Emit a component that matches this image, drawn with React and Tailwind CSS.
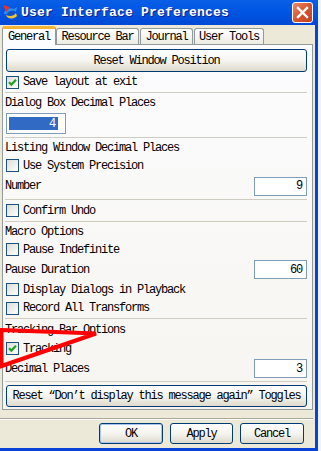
import React from "react";

const font = "font-['Liberation_Mono',monospace] text-[12px] tracking-[-1.2px] text-black";

function CheckBox({ checked }) {
  return (
    <span className="w-[13px] h-[13px] border border-[#1c5180] bg-gradient-to-br from-[#dcdcd7] to-white flex items-center justify-center shrink-0">
      {checked && (
        <svg width="9" height="9" viewBox="0 0 9 9">
          <path d="M1 4.2 L3.4 6.6 L8 1.8" stroke="#21a121" strokeWidth="2.2" fill="none" />
        </svg>
      )}
    </span>
  );
}

function CheckRow({ label, checked, h }) {
  return (
    <div className={`flex items-center gap-[4px] pl-[1px] ${h}`}>
      <CheckBox checked={checked} />
      <span>{label}</span>
    </div>
  );
}

function NumField({ value }) {
  return (
    <div className="w-[53px] h-[19px] border border-[#7f9db9] bg-white flex items-center justify-end pr-[4px]">
      {value}
    </div>
  );
}

function Sep() {
  return <div className="h-px bg-[#cfcdc0]" />;
}

function XpButton({ children, className = "" }) {
  return (
    <div
      className={`border border-[#003c74] rounded-[3px] bg-gradient-to-b from-white via-[#f5f4ef] to-[#dedbcd] flex items-center justify-center ${className}`}
    >
      {children}
    </div>
  );
}

function Tab({ label, active, w }) {
  if (active) {
    return (
      <div
        className={`${w} h-[19px] -mb-px relative z-10 bg-[#fcfcfe] border-x border-[#919b9c] rounded-t-[3px] border-t-[3px] border-t-[#f5b336] flex items-center justify-center pb-[1px]`}
      >
        {label}
      </div>
    );
  }
  return (
    <div
      className={`${w} h-[16px] bg-gradient-to-b from-white to-[#ecebe4] border border-b-0 border-[#919b9c] rounded-t-[3px] flex items-center justify-center`}
    >
      {label}
    </div>
  );
}

export default function App() {
  return (
    <div className={`relative w-[321px] h-[451px] overflow-hidden bg-[#eef2fb] ${font}`}>
      <div className="w-[318px] flex flex-col">
        {/* title bar */}
        <div className="h-[25px] bg-gradient-to-b from-[#0a5fe6] via-[#0054e3] to-[#0049d4] flex items-center pl-[2px] pr-[5px]">
          <svg width="17" height="17" viewBox="0 0 17 17" className="shrink-0">
            <path d="M2 10 C2 5 7 3 12 5 L15 3 L14 8 C12 6 7 6 5 10 Z" fill="#2b8cf0" />
            <path d="M4 11 C5 15 11 16 15 12 L14 9 C12 12 8 13 4 11 Z" fill="#f1c232" />
            <path d="M1 1 L8 3 L4 8 Z" fill="#e0342c" />
            <path d="M5 10 C7 7 11 7 13 8 L11 11 C9 11 7 11 5 10 Z" fill="#1b4fb5" />
          </svg>
          <span className="ml-[2px] font-bold text-[13px] tracking-[0.2px] text-white [text-shadow:1px_1px_0_#0a1e8c] whitespace-nowrap">
            User Interface Preferences
          </span>
          <div className="ml-auto w-[21px] h-[21px] rounded-[3px] border border-white bg-gradient-to-br from-[#ea8a6a] via-[#d9552e] to-[#c2401a] flex items-center justify-center">
            <svg width="13" height="13" viewBox="0 0 13 13">
              <path d="M2 2 L11 11 M11 2 L2 11" stroke="white" strokeWidth="2.4" strokeLinecap="square" />
            </svg>
          </div>
        </div>

        <div className="flex">
          {/* body */}
          <div className="w-[315px] h-[423px] bg-[#ece9d8] pt-px pb-[4px] flex flex-col">
            <div className="h-[18px] flex items-end pl-[2px]">
              <Tab label="General" active w="w-[54px]" />
              <Tab label="Resource Bar" w="w-[83px]" />
              <div className="w-px" />
              <Tab label="Journal" w="w-[53px]" />
              <div className="w-px" />
              <Tab label="User Tools" w="w-[70px]" />
            </div>

            <div className="ml-[2px] w-[311px] h-[366px] border border-[#919b9c] bg-gradient-to-b from-[#fcfcfe] to-[#f6f5f0] pl-[2px] pr-[5px] pt-[4px] flex flex-col">
              <XpButton className="h-[23px] ml-px">Reset Window Position</XpButton>
              <CheckRow label="Save layout at exit" checked h="h-[20px]" />
              <Sep />
              <div className="h-[20px] flex items-center">Dialog Box Decimal Places</div>
              <div className="h-[21px] w-[60px] ml-px border border-[#7f9db9] bg-white flex items-center pl-[2px]">
                <div className="w-[49px] h-[13px] bg-[#316ac5] text-white flex items-center justify-end pr-[3px]">4</div>
              </div>
              <div className="h-[3px]" />
              <Sep />
              <div className="h-[20px] flex items-center">Listing Window Decimal Places</div>
              <CheckRow label="Use System Precision" h="h-[15px]" />
              <div className="h-[26px] flex items-center justify-between">
                <span>Number</span>
                <NumField value="9" />
              </div>
              <Sep />
              <CheckRow label="Confirm Undo" h="h-[21px]" />
              <Sep />
              <div className="h-[19px] flex items-center">Macro Options</div>
              <CheckRow label="Pause Indefinite" h="h-[17px]" />
              <div className="h-[23px] flex items-center justify-between">
                <span>Pause Duration</span>
                <NumField value="60" />
              </div>
              <CheckRow label="Display Dialogs in Playback" h="h-[17px]" />
              <CheckRow label="Record All Transforms" h="h-[20px]" />
              <Sep />
              <div className="h-[22px] flex items-center">Tracking Bar Options</div>
              <CheckRow label="Tracking" checked h="h-[15px]" />
              <div className="h-[25px] flex items-center justify-between">
                <span>Decimal Places</span>
                <NumField value="3" />
              </div>
              <Sep />
              <XpButton className="h-[22px] mt-[3px] ml-px">Reset “Don’t display this message again” Toggles</XpButton>
            </div>

            <div className="mt-[8px] w-[313px] h-[2px] border-t border-[#aca899] border-b border-b-white" />

            <div className="mt-[3px] flex justify-end gap-[7px] pr-[11px]">
              <XpButton className="w-[64px] h-[21px] shadow-[inset_0_0_0_1px_#a9c3ef]">OK</XpButton>
              <XpButton className="w-[63px] h-[21px]">Apply</XpButton>
              <XpButton className="w-[64px] h-[21px]">Cancel</XpButton>
            </div>
          </div>
          <div className="w-[3px] bg-[#0842d6]" />
        </div>
        <div className="h-[3px] bg-[#0842d6]" />
      </div>

      {/* red annotation drawn over the dialog */}
      <svg className="absolute left-0 top-0 pointer-events-none" width="321" height="451">
        <polygon points="1.5,330 96,333.5 1.5,366" fill="none" stroke="#ff0000" strokeWidth="4" strokeLinejoin="miter" />
      </svg>
    </div>
  );
}
